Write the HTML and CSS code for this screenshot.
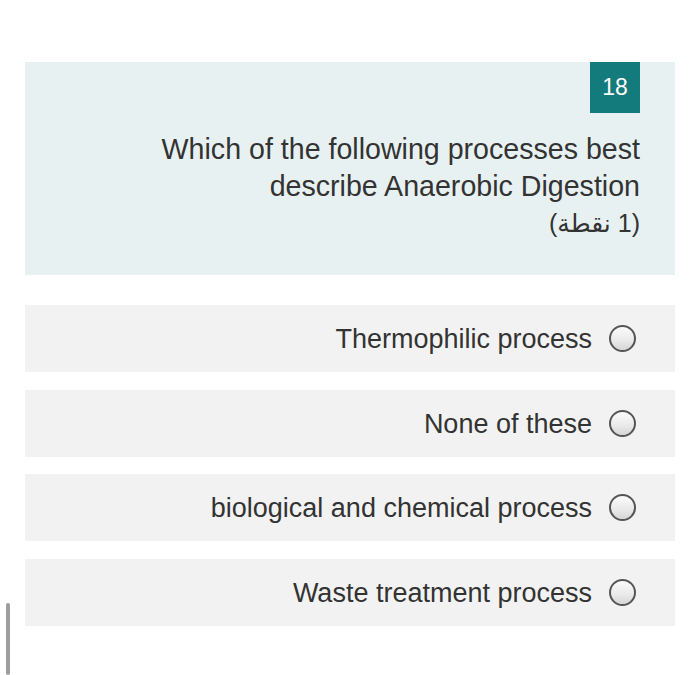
FILE: index.html
```html
<!DOCTYPE html>
<html lang="en">
<head>
<meta charset="utf-8">
<title>Question 18</title>
<link rel="stylesheet" href="styles.css">
</head>
<body>
<div class="page">
  <div class="question-card">
    <div class="badge">18</div>
    <div class="question-text">Which of the following processes best<br>describe Anaerobic Digestion</div>
    <div class="points" dir="rtl">(1 نقطة)</div>
  </div>
  <div class="options">
    <label class="option"><span class="option-text">Thermophilic process</span><span class="radio"></span></label>
    <label class="option"><span class="option-text">None of these</span><span class="radio"></span></label>
    <label class="option"><span class="option-text">biological and chemical process</span><span class="radio"></span></label>
    <label class="option"><span class="option-text">Waste treatment process</span><span class="radio"></span></label>
  </div>
</div>
<div class="scrollbar"></div>
</body>
</html>
```
FILE: styles.css
```css
html, body {
  margin: 0;
  padding: 0;
  background: #ffffff;
}
body {
  font-family: "Liberation Sans", Arial, "DejaVu Sans", sans-serif;
  color: #333333;
  width: 700px;
  height: 675px;
  overflow: hidden;
  position: relative;
}
.page {
  padding: 62px 25px 0 25px;
}
.question-card {
  background: #e8f1f2;
  padding: 0 35px 33px 0;
  display: flex;
  flex-direction: column;
  align-items: flex-end;
}
.badge {
  width: 50px;
  height: 51px;
  background: #137b7b;
  color: #ffffff;
  font-size: 23px;
  display: flex;
  align-items: center;
  justify-content: center;
}
.question-text {
  margin-top: 18px;
  font-size: 28.6px;
  line-height: 37px;
  text-align: right;
}
.points {
  font-size: 25px;
  line-height: 37px;
  font-family: "Liberation Sans", "DejaVu Sans", sans-serif;
}
.options {
  margin-top: 30px;
  display: flex;
  flex-direction: column;
  gap: 17.6px;
}
.option {
  height: 67px;
  background: #f2f2f2;
  display: flex;
  align-items: center;
  justify-content: flex-end;
  gap: 17px;
  padding-right: 39px;
}
.option-text {
  font-size: 27px;
  padding-top: 2px;
}
.radio {
  width: 23px;
  height: 23px;
  border: 2px solid #555555;
  border-radius: 50%;
  background: linear-gradient(180deg, #fbfbfb 0%, #e9e9e9 60%, #d6d6d6 100%);
  flex: none;
}
.scrollbar {
  position: absolute;
  left: 6px;
  top: 603px;
  width: 4px;
  height: 72px;
  background: #9e9e9e;
  border-radius: 2px;
}
```
